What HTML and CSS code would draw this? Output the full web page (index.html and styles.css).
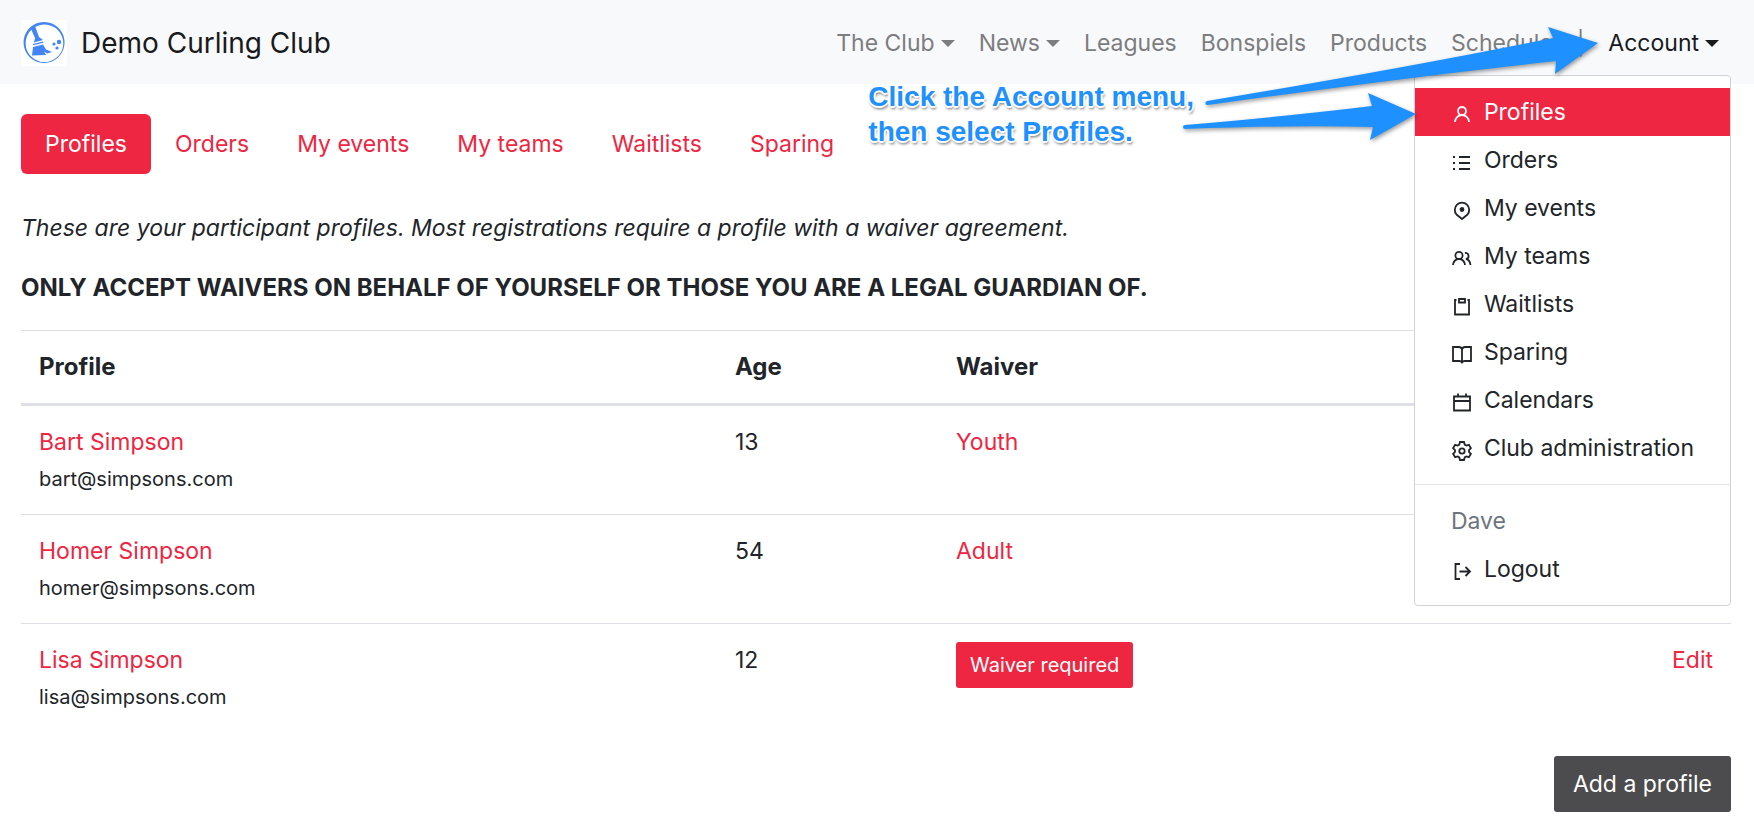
FILE: index.html
```html
<!DOCTYPE html>
<html lang="en">
<head>
<meta charset="utf-8">
<title>Profiles - Demo Curling Club</title>
<link rel="stylesheet" href="styles.css">
</head>
<body>
<header class="navbar">
  <a class="brand" href="#">
    <svg class="brand-logo" viewBox="0 0 46 46" aria-hidden="true">
      <rect width="46" height="46" fill="#fff"/>
      <path fill="#4285f4" fill-rule="evenodd" d="M23 2a20.500 20.500 0 1 0 .1 0zM23.500 4.500a18.800 18.800 0 1 1-.1 0z"/>
      <path fill="#4285f4" d="M10 9l4-3 4 11 4 3-9 2.500 1-4.500zM12 24l10-2.500.5 1.200-10.500 2.600zM12 27l10-2.500 3 5 6 2.500-5 1.500-3-2 2 3.500-14 .5z"/>
      <circle cx="38" cy="22" r="2.200" fill="#4285f4"/><circle cx="33" cy="24" r="1.600" fill="#4285f4"/><circle cx="36" cy="28" r="1.600" fill="#4285f4"/>
    </svg>
    <span>Demo Curling Club</span>
  </a>
  <nav class="main-nav" aria-label="Main">
    <button class="nav-item caret" type="button">The Club</button>
    <button class="nav-item caret" type="button">News</button>
    <a class="nav-item" href="#">Leagues</a>
    <a class="nav-item" href="#">Bonspiels</a>
    <a class="nav-item" href="#">Products</a>
    <a class="nav-item" href="#">Schedule</a>
    <span class="nav-item">|</span>
    <div class="account">
      <button class="nav-item caret current" type="button" aria-expanded="true">Account</button>
      <div class="menu">
        <a class="menu-item selected" href="#"><svg class="icon" viewBox="0 0 22 22"><circle cx="11" cy="7" r="4"/><path d="M4 18a7 7 0 0 1 14 0"/></svg>Profiles</a>
        <a class="menu-item" href="#"><svg class="icon" viewBox="0 0 22 22"><path d="M8 5h11M8 11h11M8 17h11M2 5h2M2 11h2M2 17h2"/></svg>Orders</a>
        <a class="menu-item" href="#"><svg class="icon" viewBox="0 0 22 22"><path d="M11 19L5.500 14.500a7.200 7.200 0 1 1 11 0z"/><circle class="solid" cx="11" cy="9.500" r="1.500"/></svg>My events</a>
        <a class="menu-item" href="#"><svg class="icon" viewBox="0 0 22 22"><circle cx="8" cy="7.500" r="3.600"/><path d="M2 17a6 6 0 0 1 12 0M14 5a3 3 0 0 1 1 6c2.500.5 4.200 3 4.500 6"/></svg>My teams</a>
        <a class="menu-item" href="#"><svg class="icon" viewBox="0 0 22 22"><path d="M5.500 4H4v14.500h14V4h-1.500M8 3h6v3.500H8z"/></svg>Waitlists</a>
        <a class="menu-item" href="#"><svg class="icon" viewBox="0 0 22 22"><path d="M11 18.500V5Q10 3 8 3H2v14h6.500q1.500 0 2.500 1.500 1-1.500 2.500-1.500H20V3h-6q-2 0-3 2"/></svg>Sparing</a>
        <a class="menu-item" href="#"><svg class="icon" viewBox="0 0 22 22"><path d="M3 4.500h16v14H3zM3 9h16M7 1.500v4M15 1.500v4"/></svg>Calendars</a>
        <a class="menu-item" href="#"><svg class="icon" viewBox="0 0 22 22"><path d="M9 2h4l.7 2.600 1.600.9 2.600-.7 2 3.400-1.900 2v1.600l1.900 2-2 3.400-2.600-.7-1.600.9L13 20H9l-.7-2.600-1.600-.9-2.600.7-2-3.400 1.900-2v-1.600l-1.900-2 2-3.400 2.600.7 1.600-.9z"/><circle cx="11" cy="11" r="2.700"/></svg>Club administration</a>
        <hr class="menu-divider">
        <span class="menu-item muted">Dave</span>
        <a class="menu-item" href="#"><svg class="icon" viewBox="0 0 22 22"><path d="M9 3H4.500v15H9M8.500 10.500H19M14.500 6l4.500 4.500-4.500 4.500"/></svg>Logout</a>
      </div>
    </div>
  </nav>
</header>
<main class="content">
  <nav class="tabs" aria-label="Account">
    <a class="tab active" href="#">Profiles</a>
    <a class="tab" href="#">Orders</a>
    <a class="tab" href="#">My events</a>
    <a class="tab" href="#">My teams</a>
    <a class="tab" href="#">Waitlists</a>
    <a class="tab" href="#">Sparing</a>
  </nav>
  <p class="intro"><em>These are your participant profiles. Most registrations require a profile with a waiver agreement.</em></p>
  <p class="intro"><strong>ONLY ACCEPT WAIVERS ON BEHALF OF YOURSELF OR THOSE YOU ARE A LEGAL GUARDIAN OF.</strong></p>
  <table class="profiles">
    <colgroup><col class="col-profile"><col class="col-age"><col class="col-waiver"><col></colgroup>
    <thead><tr><th>Profile</th><th>Age</th><th>Waiver</th><th></th></tr></thead>
    <tbody>
      <tr><td><a href="#">Bart Simpson</a><div class="email">bart@simpsons.com</div></td><td>13</td><td><a href="#">Youth</a></td><td></td></tr>
      <tr><td><a href="#">Homer Simpson</a><div class="email">homer@simpsons.com</div></td><td>54</td><td><a href="#">Adult</a></td><td></td></tr>
      <tr><td><a href="#">Lisa Simpson</a><div class="email">lisa@simpsons.com</div></td><td>12</td><td><button class="btn btn-small" type="button">Waiver required</button></td><td class="actions"><a href="#">Edit</a></td></tr>
    </tbody>
  </table>
  <div class="footer-actions"><button class="btn btn-dark" type="button">Add a profile</button></div>
</main>
<aside class="callout">
  <p class="callout-text">Click the Account menu,<br>then select Profiles.</p>
  <svg class="callout-arrows" viewBox="1174 0 430 150" aria-hidden="true">
    <path d="M1207 101Q1400 69 1553 38L1548 27 1598 43 1555 74 1556 61Q1400 78 1208 105A2 2 0 0 1 1207 101z"/>
    <path d="M1185 125Q1290 116 1372 106L1368 93 1416 114 1370 140 1373 127Q1290 125 1185 129A2 2 0 0 1 1185 125z"/>
  </svg>
</aside>
</body>
</html>
```
FILE: styles.css
```css
* { box-sizing: border-box; }
body {
  margin: 0;
  position: relative;
  background: #fff;
  color: #212529;
  font-family: Inter, "Liberation Sans", sans-serif;
  font-size: 23px;
  line-height: 36px;
}
a { color: #ee2642; text-decoration: none; }
button { font: inherit; border: 0; cursor: pointer; }
p { margin: 0; }
strong, th { font-size: 24px; }

.navbar {
  display: flex;
  align-items: center;
  justify-content: space-between;
  height: 84px;
  padding: 2px 23px 0 21px;
  background: #f8f9fb;
}
.brand { display: flex; align-items: center; gap: 14px; color: #181a1b; font-size: 28px; }
.brand-logo { width: 46px; height: 46px; }
.main-nav { display: flex; }
.nav-item {
  display: flex;
  align-items: center;
  padding: 12px;
  background: none;
  color: #7c7d7e;
}
.nav-item.current { color: #181a1b; }
.caret::after {
  content: "";
  margin-left: 6px;
  border: 7px solid transparent;
  border-top-color: currentColor;
  border-bottom-width: 0;
}
.account { position: relative; }
.menu {
  position: absolute;
  top: 62px;
  right: 0;
  z-index: 2;
  padding: 12px 0;
  background: #fff;
  border: 1px solid #d2d3d4;
  border-radius: 4px;
}
.menu-item {
  display: flex;
  align-items: center;
  gap: 11px;
  padding: 6px 36px;
  color: #212529;
  white-space: nowrap;
}
.menu-item.selected { background: #ee2642; color: #fff; }
.menu-item.muted { color: #6c757d; }
.menu-divider { margin: 12px 0; border: 0; border-top: 1px solid #e4e6e9; }
.icon {
  width: 22px;
  height: 22px;
  margin-top: 6px;
  fill: none;
  stroke: currentColor;
  stroke-width: 1.800;
}
.icon .solid { fill: currentColor; }

.content { padding: 30px 23px 24px 21px; }
.tabs { display: flex; margin-bottom: 36px; }
.tab { padding: 12px 24px; border-radius: 6px; }
.tab.active { background: #ee2642; color: #fff; }
.intro { margin-bottom: 24px; }
.profiles { width: 100%; table-layout: fixed; border-spacing: 0; }
.col-profile { width: 696px; }
.col-age { width: 221px; }
.col-waiver { width: 422px; }
.profiles th, .profiles td { padding: 18px; text-align: left; vertical-align: top; border-top: 1px solid #dee0e6; }
.profiles thead th { border-bottom: 3px solid #dee0e6; }
.profiles tbody tr:first-child td { border-top: 0; }
.profiles .actions { text-align: right; }
.email { padding-top: 2px; font-size: 20px; line-height: 34px; }
.btn { border-radius: 3px; color: #fff; }
.btn-small { display: block; padding: 5px 14px; background: #ee2642; font-size: 20px; }
.btn-dark { padding: 10px 19px; background: #4c4c4e; }
.footer-actions { display: flex; justify-content: flex-end; margin-top: 24px; }

.callout { position: absolute; top: 0; right: 150px; z-index: 3; pointer-events: none; }
.callout-arrows { display: block; width: 430px; height: 150px; fill: #1e90ff; filter: drop-shadow(1px 2px 2px rgba(0, 0, 0, 0.4)); }
.callout-text {
  position: absolute;
  top: 79px;
  right: 410px;
  color: #1e90ff;
  font-family: "Liberation Sans", Arial, sans-serif;
  font-size: 28px;
  font-weight: bold;
  line-height: 35px;
  white-space: nowrap;
  text-shadow: 2px 0 #fff, -2px 0 #fff, 0 2px #fff, 0 -2px #fff, 1px 1px #fff, -1px 1px #fff, 1px -1px #fff, -1px -1px #fff, 1px 3px 3px rgba(0, 0, 0, 0.6);
}
```
